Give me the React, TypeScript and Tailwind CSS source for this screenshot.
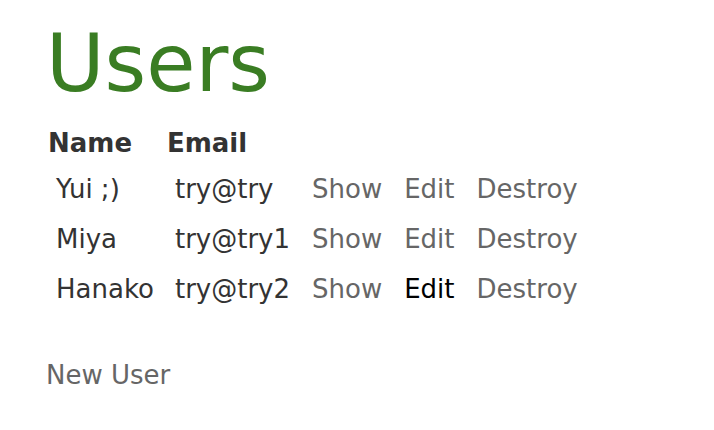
import React from "react";

interface User {
  name: string;
  email: string;
  hovered?: boolean;
}

const users: User[] = [
  { name: "Yui ;)", email: "try@try" },
  { name: "Miya", email: "try@try1" },
  { name: "Hanako", email: "try@try2", hovered: true },
];

const tdClass = "pl-[8px] pr-[14px] py-[10px] leading-[30px] text-left align-top";

const App: React.FC = () => {
  return (
    <div className="min-h-[430px] w-[714px] bg-white pl-[46px] font-['DejaVu_Sans',sans-serif] text-[26px] text-[#333]">
      <h1 className="pt-[24px] text-[80px] leading-[80px] text-[#3a7d23]">Users</h1>

      <table className="ml-[2px] mt-[24px]">
        <thead>
          <tr>
            <th className="pr-[13px] pb-[6px] text-left font-bold leading-[30px]">Name</th>
            <th className="pr-[14px] pb-[6px] text-left font-bold leading-[30px]">Email</th>
            <th />
            <th />
            <th />
          </tr>
        </thead>
        <tbody>
          {users.map((u) => (
            <tr key={u.email}>
              <td className="pl-[8px] pr-[13px] py-[10px] text-left align-top leading-[30px]">{u.name}</td>
              <td className={tdClass}>{u.email}</td>
              <td className={tdClass}>
                <a href="#" className="text-[#666]">Show</a>
              </td>
              <td className={tdClass}>
                <a href="#" className={u.hovered ? "text-black" : "text-[#666]"}>Edit</a>
              </td>
              <td className={tdClass}>
                <a href="#" className="text-[#666]">Destroy</a>
              </td>
            </tr>
          ))}
        </tbody>
      </table>

      <div className="mt-[46px] leading-[30px]">
        <a href="#" className="text-[#666]">New User</a>
      </div>
    </div>
  );
};

export default App;
